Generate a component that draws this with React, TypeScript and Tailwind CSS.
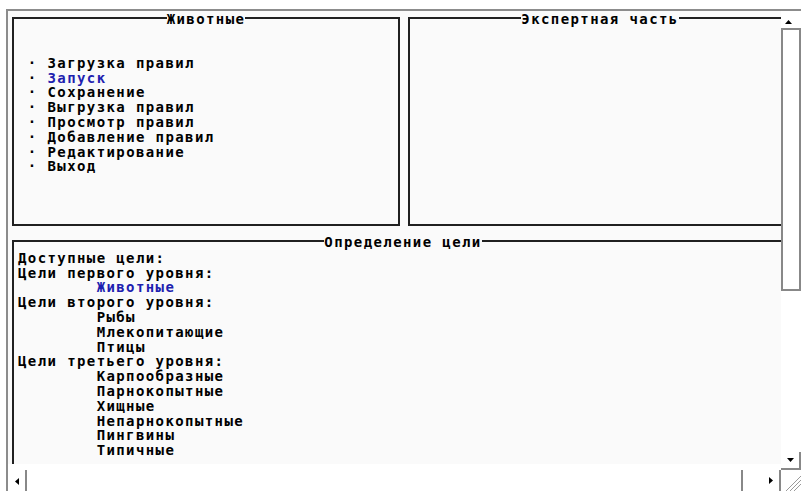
import type { ReactNode } from "react";

const textCls =
  "font-['DejaVu_Sans_Mono',monospace] font-bold text-[14px] leading-[14.8px] tracking-[1.4px] whitespace-pre";

const menu = [
  "Загрузка правил",
  "Запуск",
  "Сохранение",
  "Выгрузка правил",
  "Просмотр правил",
  "Добавление правил",
  "Редактирование",
  "Выход",
];
const activeItem = 1;

const goals: { text: string; blue?: boolean }[] = [
  { text: "Доступные цели:" },
  { text: "Цели первого уровня:" },
  { text: "        Животные", blue: true },
  { text: "Цели второго уровня:" },
  { text: "        Рыбы" },
  { text: "        Млекопитающие" },
  { text: "        Птицы" },
  { text: "Цели третьего уровня:" },
  { text: "        Карпообразные" },
  { text: "        Парнокопытные" },
  { text: "        Хищные" },
  { text: "        Непарнокопытные" },
  { text: "        Пингвины" },
  { text: "        Типичные" },
];

function Panel({ title, className, children }: { title: string; className: string; children?: ReactNode }) {
  return (
    <fieldset className={`shrink-0 border-2 border-[#202020] ${className}`}>
      <legend className={`mx-auto px-0 bg-[#fafafa] text-black ${textCls}`}>
        <span className="relative top-[1px]">{title}</span>
      </legend>
      {children}
    </fieldset>
  );
}

function Arrow({ dir }: { dir: "up" | "down" | "left" | "right" }) {
  const pts = {
    up: "0,4 7,4 3.5,0",
    down: "0,0 7,0 3.5,4",
    left: "4,0 4,7 0,3.5",
    right: "0,0 0,7 4,3.5",
  }[dir];
  const vertical = dir === "up" || dir === "down";
  return (
    <svg width={vertical ? 7 : 4} height={vertical ? 4 : 7} className="block">
      <polygon points={pts} fill="#000" />
    </svg>
  );
}

export default function App() {
  return (
    <div className="w-[801px] h-[491px] bg-white pl-[6px] pt-[9px] overflow-hidden">
      <div className="flex flex-col h-[482px] border-t-2 border-l-2 border-[#8c8c8c]">
        <div className="flex h-[459px]">
          {/* console area */}
          <div className="w-[773px] h-[453px] bg-[#fafafa] overflow-hidden">
            <div className="w-[800px] pl-[4px]">
              <div className="flex gap-[8px]">
                <Panel title="Животные" className="w-[388px] h-[215px]">
                  <div className="pl-[4px] pt-[30px]">
                    {menu.map((item, i) => (
                      <div key={item} className={`${textCls} ${i === activeItem ? "text-[#1f1fb0]" : "text-black"}`}>
                        <span className="text-black">{" · "}</span>
                        {item}
                      </div>
                    ))}
                  </div>
                </Panel>
                <Panel title="Экспертная часть" className="w-[384px] h-[215px]" />
              </div>
              <Panel title="Определение цели" className="mt-[8px] w-[782px] h-[240px]">
                <div className="pl-[4px] pt-[2px]">
                  {goals.map((g, i) => (
                    <div key={i} className={`${textCls} ${g.blue ? "text-[#1f1fb0]" : "text-black"}`}>
                      {g.text}
                    </div>
                  ))}
                </div>
              </Panel>
            </div>
          </div>

          {/* vertical scrollbar */}
          <div className="w-[20px] flex flex-col bg-white">
            <div className="h-[19px] border-b-2 border-[#888] flex justify-start pl-[4px] pt-[9px]">
              <Arrow dir="up" />
            </div>
            <div className="h-[261px] border-l-2 border-r-2 border-b-2 border-[#888]" />
            <div className="flex-1" />
            <div className="h-[18px] border-r-2 border-b-2 border-[#888] flex items-center justify-center">
              <Arrow dir="down" />
            </div>
          </div>
        </div>

        {/* horizontal scrollbar */}
        <div className="flex h-[21px] bg-white">
          <div className="w-[19px] border-r-2 border-[#888] flex items-center justify-center pt-[2px]">
            <Arrow dir="left" />
          </div>
          <div className="w-[716px] border-r-2 border-[#888]" />
          <div className="w-[19px]" />
          <div className="w-[19px] border-r-2 border-[#888] flex items-center justify-center">
            <Arrow dir="right" />
          </div>
          <div className="w-[20px]">
            <svg width="20" height="21" className="block">
              <line x1="5" y1="21" x2="20" y2="6" stroke="#9a9a9a" strokeWidth="1" />
              <line x1="9" y1="21" x2="20" y2="10" stroke="#9a9a9a" strokeWidth="1" />
              <line x1="13" y1="21" x2="20" y2="14" stroke="#9a9a9a" strokeWidth="1" />
            </svg>
          </div>
        </div>
      </div>
    </div>
  );
}
